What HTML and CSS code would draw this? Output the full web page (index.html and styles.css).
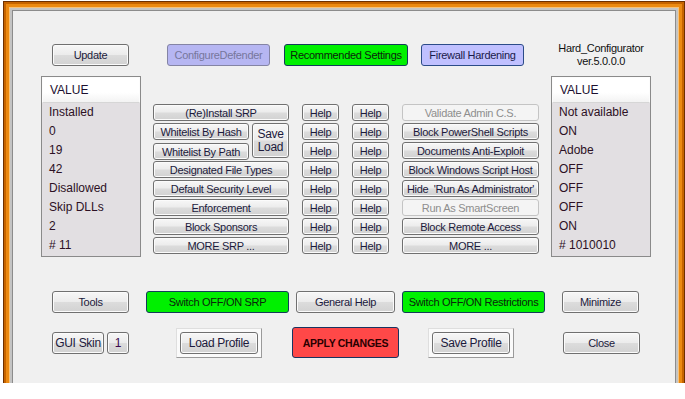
FILE: index.html
```
<!DOCTYPE html>
<html lang="en">
<head>
    <meta charset="UTF-8">
    <meta name="viewport" content="width=device-width, initial-scale=1.0">
    <title>Hard_Configurator</title>
    <link rel="stylesheet" href="styles.css">
</head>
<body>
    <div class="panel">
        <div class="top-row">
            <button class="btn update">Update</button>
            <button class="btn defender">ConfigureDefender</button>
            <button class="btn green recommended">Recommended Settings</button>
            <button class="btn firewall">Firewall Hardening</button>
            <div class="app-title">Hard_Configurator<br>ver.5.0.0.0</div>
        </div>

        <div class="main">
            <div class="value-list">
                <div class="list-head">VALUE</div>
                <div class="list-row">Installed</div>
                <div class="list-row">0</div>
                <div class="list-row">19</div>
                <div class="list-row">42</div>
                <div class="list-row">Disallowed</div>
                <div class="list-row">Skip DLLs</div>
                <div class="list-row">2</div>
                <div class="list-row"># 11</div>
            </div>

            <div class="options">
                <button class="btn opt">(Re)Install SRP</button>
                <button class="btn opt">Help</button>
                <button class="btn opt">Help</button>
                <button class="btn opt disabled">Validate Admin C.S.</button>

                <div class="whitelist">
                    <div class="whitelist-stack">
                        <button class="btn opt">Whitelist By Hash</button>
                        <button class="btn opt">Whitelist By Path</button>
                    </div>
                    <button class="btn save-load">Save<br>Load</button>
                </div>
                <button class="btn opt">Help</button>
                <button class="btn opt">Help</button>
                <button class="btn opt">Block PowerShell Scripts</button>
                <button class="btn opt">Help</button>
                <button class="btn opt">Help</button>
                <button class="btn opt">Documents Anti-Exploit</button>

                <button class="btn opt">Designated File Types</button>
                <button class="btn opt">Help</button>
                <button class="btn opt">Help</button>
                <button class="btn opt">Block Windows Script Host</button>

                <button class="btn opt">Default Security Level</button>
                <button class="btn opt">Help</button>
                <button class="btn opt">Help</button>
                <button class="btn opt">Hide&nbsp; 'Run As Administrator'</button>

                <button class="btn opt">Enforcement</button>
                <button class="btn opt">Help</button>
                <button class="btn opt">Help</button>
                <button class="btn opt disabled">Run As SmartScreen</button>

                <button class="btn opt">Block Sponsors</button>
                <button class="btn opt">Help</button>
                <button class="btn opt">Help</button>
                <button class="btn opt">Block Remote Access</button>

                <button class="btn opt">MORE SRP ...</button>
                <button class="btn opt">Help</button>
                <button class="btn opt">Help</button>
                <button class="btn opt">MORE ...</button>
            </div>

            <div class="value-list">
                <div class="list-head">VALUE</div>
                <div class="list-row">Not available</div>
                <div class="list-row">ON</div>
                <div class="list-row">Adobe</div>
                <div class="list-row">OFF</div>
                <div class="list-row">OFF</div>
                <div class="list-row">OFF</div>
                <div class="list-row">ON</div>
                <div class="list-row"># 1010010</div>
            </div>
        </div>

        <div class="bottom-row">
            <button class="btn tools">Tools</button>
            <button class="btn green switch-srp">Switch OFF/ON SRP</button>
            <button class="btn general-help">General Help</button>
            <button class="btn green switch-restr">Switch OFF/ON Restrictions</button>
            <button class="btn minimize">Minimize</button>
        </div>

        <div class="bottom-row second">
            <button class="btn gui-skin">GUI Skin</button>
            <button class="btn skin-num">1</button>
            <div class="default-frame load-frame">
                <button class="btn profile">Load Profile</button>
            </div>
            <button class="btn apply">APPLY CHANGES</button>
            <div class="default-frame save-frame">
                <button class="btn profile">Save Profile</button>
            </div>
            <button class="btn close">Close</button>
        </div>
    </div>
</body>
</html>
```

FILE: styles.css
```
* {
    margin: 0;
    padding: 0;
    box-sizing: border-box;
}

body {
    background-color: #ffffff;
    overflow: hidden;
    font-family: "Liberation Sans", Arial, sans-serif;
}

/* window body with the orange frame drawn as rings */
.panel {
    width: 662px;
    height: 372px;
    margin: 11px 0 0 13px;
    padding: 33px 0 0 28px;
    background-color: #f0f0f0;
    box-shadow:
        0 0 0 1px #8c8c8c,
        0 0 0 3px #c4c4c4,
        0 0 0 4px #f6c27a,
        0 0 0 7px #ec8a12,
        0 0 0 9px #c66400,
        0 0 0 10px #6e3000;
}

.btn {
    display: block;
    height: 22px;
    border: 1px solid #707070;
    border-radius: 3px;
    background: linear-gradient(to bottom, #f7f7f7 0%, #ececec 48%, #dcdcdc 52%, #d2d2d2 100%);
    box-shadow: inset 0 0 0 1px #fbfbfb;
    color: #1c1a3c;
    font-family: "Liberation Sans", Arial, sans-serif;
    font-size: 11px;
    letter-spacing: -0.3px;
    white-space: nowrap;
    overflow: hidden;
    text-align: center;
    line-height: 18px;
}

.btn.green {
    background: #00f000;
    border-color: #143c5a;
    box-shadow: none;
    color: #0c240c;
}

.btn.disabled {
    background: #f4f4f4;
    border-color: #c4c4c4;
    box-shadow: none;
    color: #8e8e8e;
}

/* top row */
.top-row {
    display: flex;
    align-items: flex-start;
    height: 22px;
}

.update { width: 77px; margin-left: 11px; }

.defender {
    width: 103px;
    margin-left: 38px;
    background: #b6b6f2;
    border-color: #8484a4;
    box-shadow: none;
    color: #76769c;
}

.recommended { width: 124px; margin-left: 14px; }

.firewall {
    width: 103px;
    margin-left: 13px;
    background: #c0c0ff;
    border-color: #2c4c88;
    box-shadow: none;
    color: #1a1a4a;
}

.app-title {
    width: 100px;
    margin: -2px 0 0 27px;
    font-size: 11px;
    letter-spacing: -0.3px;
    line-height: 13px;
    text-align: center;
    color: #101010;
}

/* lists and options */
.main {
    display: flex;
    gap: 12px;
    margin-top: 10px;
}

.value-list {
    width: 100px;
    height: 181px;
    border: 1px solid #8a8a8a;
    background-color: #e2dfe2;
    font-size: 12px;
    color: #2c1024;
}

.list-head {
    height: 26px;
    padding-left: 7px;
    line-height: 24px;
    background: linear-gradient(to bottom, #ffffff 0%, #ffffff 60%, #f3f3f3 100%);
    border: 1px solid #fcfcfc;
    border-bottom: 1px solid #d6d6d6;
    color: #1c1030;
}

.list-row {
    height: 19px;
    padding-left: 7px;
    line-height: 19px;
}

.options {
    display: grid;
    grid-template-columns: 136px 37px 37px 137px;
    grid-auto-rows: 19px;
    column-gap: 13px;
    padding-top: 27px;
}

.btn.opt {
    height: 17px;
    margin-top: 1px;
    line-height: 14px;
}

.whitelist {
    grid-row: span 2;
    display: flex;
    gap: 3px;
}

.whitelist-stack {
    display: flex;
    flex-direction: column;
    gap: 2px;
    width: 96px;
}

.save-load {
    width: 37px;
    height: 35px;
    margin-top: 1px;
    line-height: 13px;
    font-size: 12px;
}

/* bottom rows */
.bottom-row {
    display: flex;
    align-items: center;
    margin-top: 34px;
}

.bottom-row.second {
    margin-top: 14px;
    height: 31px;
}

.tools { width: 77px; margin-left: 11px; }
.switch-srp { width: 143px; margin-left: 17px; }
.general-help { width: 99px; margin-left: 7px; }
.switch-restr { width: 143px; margin-left: 7px; }
.minimize { width: 77px; margin-left: 17px; }

.gui-skin { width: 52px; margin-left: 11px; font-size: 12px; }
.skin-num { width: 22px; margin-left: 3px; font-size: 12px; color: #3c0a50; }

.default-frame {
    padding: 3px;
    border: 1px solid;
    border-color: #dedede #9a9a9a #9a9a9a #dedede;
    background-color: #fafafa;
}

.load-frame { margin-left: 47px; }
.save-frame { margin-left: 29px; }

.profile { width: 78px; font-size: 12px; }

.apply {
    width: 107px;
    height: 31px;
    margin-left: 30px;
    background: #ff4848;
    border-color: #1a3460;
    box-shadow: none;
    color: #2a0000;
    font-weight: bold;
    font-size: 10.5px;
    line-height: 28px;
}

.close { width: 77px; margin-left: 49px; }
```
